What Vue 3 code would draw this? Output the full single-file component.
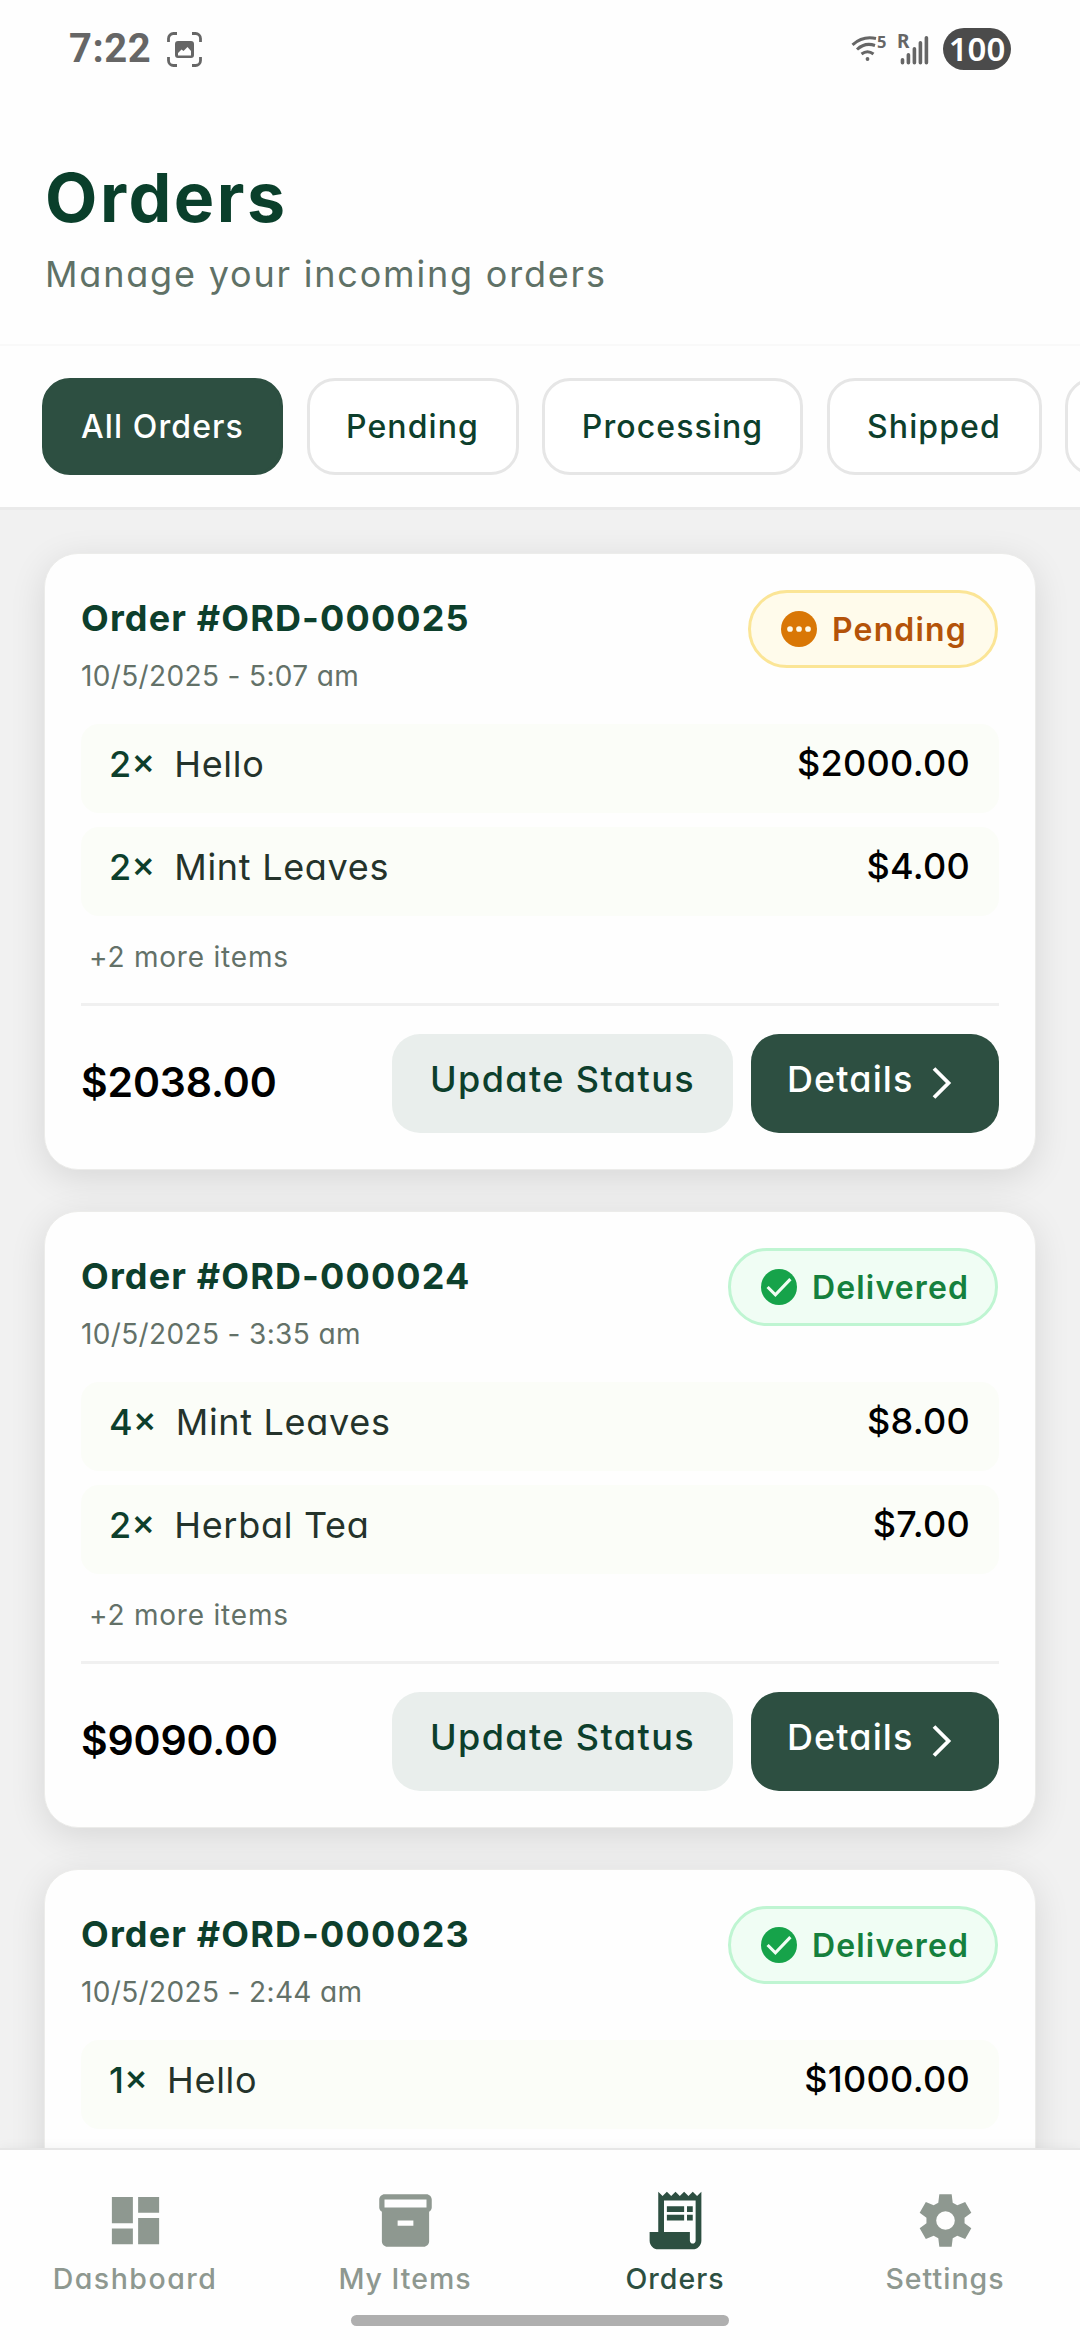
<script setup>
const chips = [
  { key: 'all', label: 'All Orders', active: true },
  { key: 'pending', label: 'Pending' },
  { key: 'processing', label: 'Processing' },
  { key: 'shipped', label: 'Shipped' },
  { key: 'delivered', label: 'Delivered' },
]

const orders = [
  {
    id: 'ORD-000025',
    date: '10/5/2025 - 5:07 am',
    status: 'Pending',
    items: [
      { qty: 2, name: 'Hello', price: '$2000.00' },
      { qty: 2, name: 'Mint Leaves', price: '$4.00' },
    ],
    more: 2,
    total: '$2038.00',
  },
  {
    id: 'ORD-000024',
    date: '10/5/2025 - 3:35 am',
    status: 'Delivered',
    items: [
      { qty: 4, name: 'Mint Leaves', price: '$8.00' },
      { qty: 2, name: 'Herbal Tea', price: '$7.00' },
    ],
    more: 2,
    total: '$9090.00',
  },
  {
    id: 'ORD-000023',
    date: '10/5/2025 - 2:44 am',
    status: 'Delivered',
    items: [{ qty: 1, name: 'Hello', price: '$1000.00' }],
    more: 0,
    total: '$1000.00',
  },
]

const tabs = [
  {
    label: 'Dashboard',
    key: 'dashboard',
    path: 'M3 13h8V3H3v10zm0 8h8v-6H3v6zm10 0h8V11h-8v10zm0-18v6h8V3h-8z',
  },
  {
    label: 'My Items',
    key: 'items',
    path: 'M20 2H4c-1 0-2 .9-2 2v3.01c0 .72.43 1.34 1 1.69V20c0 1.1 1.1 2 2 2h14c.9 0 2-.9 2-2V8.7c.57-.35 1-.97 1-1.69V4c0-1.1-1-2-2-2zm-5 12H9v-2h6v2zm5-7H4V4h16v3z',
  },
  {
    label: 'Orders',
    key: 'orders',
    active: true,
    path: 'M19.5 3.5L18 2l-1.5 1.5L15 2l-1.5 1.5L12 2l-1.5 1.5L9 2 7.5 3.5 6 2v14H3v3c0 1.66 1.34 3 3 3h12c1.66 0 3-1.34 3-3V2l-1.5 1.5zM19 19c0 .55-.45 1-1 1s-1-.45-1-1v-3H8V5h11v14zM9 7h6v2H9zM16 7h2v2h-2zM9 10h6v2H9zM16 10h2v2h-2z',
  },
  {
    label: 'Settings',
    key: 'settings',
    path: 'M9.65 2H14.35L14.75 5.2 16.51 6.22 19.49 4.96 21.84 9.04 19.26 10.98V13.02L21.84 14.96 19.49 19.04 16.51 17.78 14.75 18.8 14.35 22H9.65L9.25 18.8 7.49 17.78 4.51 19.04 2.16 14.96 4.74 13.02V10.98L2.16 9.04 4.51 4.96 7.49 6.22 9.25 5.2zM12 15.55a3.55 3.55 0 1 0 0-7.1 3.55 3.55 0 0 0 0 7.1z',
  },
]
</script>

<template>
  <div class="screen">
    <div class="status">
      <span class="clock">7:22</span>
      <svg class="capture" viewBox="0 0 35 35" fill="none">
        <path d="M1.5 10V6.5a5 5 0 0 1 5-5H10M25 1.5h3.5a5 5 0 0 1 5 5V10M33.5 25v3.5a5 5 0 0 1-5 5H25M10 33.5H6.5a5 5 0 0 1-5-5V25" stroke="#666" stroke-width="2.8" />
        <path fill="#666" fill-rule="evenodd" d="M11 9h13a3 3 0 0 1 3 3v11a3 3 0 0 1-3 3H11a3 3 0 0 1-3-3V12a3 3 0 0 1 3-3zM11 23.5h13v-4.500l-3.5-4-4 4-2-1.5-3.5 3.5z" />
      </svg>
      <span class="spacer"></span>
      <svg class="wifi" viewBox="0 -10 38 50" fill="none" stroke="#666" stroke-width="3">
        <path d="M1.5 10.8Q12 1.5 25 4.500M6 15.5Q14 8 24 11.5M10.5 20Q16.5 15.5 22.500 20" />
        <circle cx="16.5" cy="25" r="1.9" fill="#666" stroke="none" />
        <text x="26" y="14" class="tiny">5</text>
      </svg>
      <svg class="signal" viewBox="0 -9 32 50">
        <text x="0" y="15" class="tiny tiny-r">R</text>
        <path d="M5.5 26.700v3M11.4 21.700v8M17.4 15.700v14M23.4 9.700v20M29.4 4.700v25" stroke="#666" stroke-width="3.6" stroke-linecap="round" />
      </svg>
      <span class="battery">100</span>
    </div>

    <header class="header">
      <h1>Orders</h1>
      <p>Manage your incoming orders</p>
    </header>

    <div class="chips">
      <button v-for="c in chips" :key="c.key" class="chip" :class="['chip-' + c.key, { active: c.active }]">
        {{ c.label }}
      </button>
    </div>

    <main class="list">
      <article v-for="o in orders" :key="o.id" class="card">
        <div class="card-head">
          <div>
            <h2>Order #{{ o.id }}</h2>
            <p class="date">{{ o.date }}</p>
          </div>
          <span class="badge" :class="o.status.toLowerCase()">
            <svg v-if="o.status === 'Pending'" viewBox="0 0 24 24">
              <circle cx="12" cy="12" r="12" fill="#d97706" />
              <g fill="#fffbeb">
                <circle cx="6" cy="12" r="1.9" />
                <circle cx="12" cy="12" r="1.9" />
                <circle cx="18" cy="12" r="1.9" />
              </g>
            </svg>
            <svg v-else viewBox="0 0 24 24">
              <circle cx="12" cy="12" r="12" fill="#16a34a" />
              <path d="M4.4 12l5.200 5.200L19.6 6.800" fill="none" stroke="#f0fdf4" stroke-width="2.1" />
            </svg>
            <span>{{ o.status }}</span>
          </span>
        </div>

        <div class="items">
          <div v-for="i in o.items" :key="i.name" class="item">
            <span class="qty">{{ i.qty }}×</span>
            <span class="name">{{ i.name }}</span>
            <span class="price">{{ i.price }}</span>
          </div>
        </div>
        <p v-if="o.more" class="more">+{{ o.more }} more items</p>

        <div class="card-foot">
          <span class="total">{{ o.total }}</span>
          <button class="btn update">Update Status</button>
          <button class="btn details">
            <span>Details</span>
            <svg viewBox="0 0 20 32"><path d="M2 1.5l14.500 14.500L2 30.5" fill="none" stroke="#fff" stroke-width="3.8" /></svg>
          </button>
        </div>
      </article>
    </main>

    <nav class="nav">
      <a v-for="t in tabs" :key="t.key" class="tab" :class="['tab-' + t.key, { active: t.active }]">
        <span class="icon"><svg viewBox="0 0 24 24"><path :d="t.path" fill="currentColor" fill-rule="evenodd" /></svg></span>
        <span class="label">{{ t.label }}</span>
      </a>
      <div class="handle"></div>
    </nav>
  </div>
</template>

<style>
body {
  background: #f1f1f1;
}
</style>

<style scoped>
.screen {
  width: 1080px;
  height: 2340px;
  display: flex;
  flex-direction: column;
  overflow: hidden;
  background: #f1f1f1;
  font-family: Inter, 'Open Sans', sans-serif;
  font-feature-settings: 'cv11' 1;
}
h1,
h2,
p {
  margin: 0;
}
button {
  font-family: inherit;
  font-feature-settings: inherit;
  border: 0;
  padding: 0;
}
.status,
.header,
.chips {
  background: #fefefe;
  flex: none;
}
.status {
  height: 98px;
  box-sizing: border-box;
  display: flex;
  align-items: center;
  padding: 0 69px;
}
.clock {
  width: 98px;
  font: 700 40px/40px Roboto, sans-serif;
  letter-spacing: 0.5px;
  color: #666;
}
.capture {
  width: 35px;
  height: 35px;
}
.spacer {
  flex: 1;
}
.wifi {
  width: 38px;
  height: 50px;
  margin-right: 8px;
}
.signal {
  width: 32px;
  height: 50px;
  margin-right: 14px;
}
.tiny {
  font: 700 16.5px 'Noto Sans', sans-serif;
  fill: #666;
  stroke: none;
}
.tiny-r {
  font-size: 19px;
}
.battery {
  width: 68px;
  height: 42px;
  border-radius: 21px;
  background: #4b4b4b;
  color: #fff;
  font: 600 33px/41px 'Noto Sans', sans-serif;
  text-align: center;
}
.header {
  height: 248px;
  box-sizing: border-box;
  padding: 58px 45px 0;
  border-bottom: 2px solid #f9f9f9;
}
h1 {
  font-size: 68px;
  line-height: 82px;
  font-weight: 700;
  letter-spacing: 2.5px;
  color: #0a3f2b;
}
.header p {
  margin-top: 10px;
  font-size: 36px;
  line-height: 52px;
  letter-spacing: 1.8px;
  color: #5f7166;
}
.chips {
  height: 164px;
  box-sizing: border-box;
  display: flex;
  gap: 23.5px;
  padding: 32px 0 0 42px;
  border-bottom: 3px solid #eaeaea;
}
.chip {
  flex: none;
  height: 97px;
  box-sizing: border-box;
  border: 3px solid #e6e6e6;
  border-radius: 28px;
  background: #fff;
  color: #0d3f2c;
  font-size: 32px;
  font-weight: 500;
  letter-spacing: 1.1px;
}
.chip.active {
  background: #2d4f41;
  border-color: #2d4f41;
  color: #fff;
}
.chip-all {
  width: 241px;
}
.chip-pending {
  width: 212px;
}
.chip-processing {
  width: 261px;
}
.chip-shipped {
  width: 215px;
}
.chip-delivered {
  width: 230px;
}
.list {
  flex: 1;
  min-height: 0;
  overflow: hidden;
  display: flex;
  flex-direction: column;
  gap: 41px;
  padding: 43px 44px 0;
}
.card {
  flex: none;
  box-sizing: border-box;
  border: 1px solid #ececea;
  border-radius: 34px;
  background: #fefefe;
  padding: 36px;
  box-shadow: 0 8px 36px rgba(0, 0, 0, 0.11);
}
.card-head {
  height: 134px;
  display: flex;
  justify-content: space-between;
  align-items: flex-start;
}
h2 {
  padding-top: 3px;
  font-size: 36px;
  line-height: 50px;
  font-weight: 700;
  letter-spacing: 1.15px;
  color: #0d3f2c;
}
.date {
  margin-top: 13px;
  font-size: 28px;
  line-height: 40px;
  letter-spacing: 0.36px;
  color: #637168;
}
.badge {
  height: 78px;
  box-sizing: border-box;
  display: flex;
  align-items: center;
  gap: 15px;
  padding: 0 0 0 30px;
  margin-right: 1px;
  border: 3px solid;
  border-radius: 39px;
  font-size: 32px;
  font-weight: 600;
  letter-spacing: 1.15px;
}
.badge svg {
  width: 36px;
  height: 36px;
}
.badge.pending {
  width: 250px;
  background: #fffbeb;
  border-color: #fbe596;
  color: #b45309;
}
.badge.delivered {
  width: 270px;
  background: #f0fdf4;
  border-color: #bff5d2;
  color: #15803d;
}
.items {
  display: flex;
  flex-direction: column;
  gap: 14px;
  margin-bottom: 21px;
}
.item {
  height: 89px;
  box-sizing: border-box;
  display: flex;
  padding: 14px 29px 0 28px;
  border-radius: 18px;
  background: #fbfdf8;
  font-size: 36px;
  line-height: 53px;
}
.qty {
  color: #0d3f2c;
  font-weight: 500;
  margin-right: 19px;
}
.name {
  flex: 1;
  letter-spacing: 0.7px;
  color: #24332b;
}
.price {
  color: #000;
  font-weight: 500;
  line-height: 51px;
  letter-spacing: 0.3px;
}
.more {
  margin: 0 8px 26px;
  font-size: 28px;
  line-height: 40px;
  letter-spacing: 0.8px;
  color: #637168;
}
.card-foot {
  display: flex;
  align-items: center;
  border-top: 3px solid #f0f0f0;
  padding-top: 28px;
}
.total {
  flex: 1;
  padding-bottom: 3px;
  font-size: 41px;
  line-height: 60px;
  font-weight: 600;
  letter-spacing: -0.15px;
  color: #000;
}
.btn {
  height: 99px;
  border-radius: 28px;
  font-size: 36px;
  font-weight: 500;
  letter-spacing: 1.4px;
  padding-bottom: 10px;
}
.update {
  width: 341px;
  background: #e9eeec;
  color: #0d3f2c;
  margin-right: 18px;
}
.details {
  width: 248px;
  background: #2d4f41;
  color: #fff;
  display: flex;
  align-items: center;
  justify-content: flex-start;
  letter-spacing: 1.1px;
  padding-left: 36px;
}
.details svg {
  width: 20px;
  height: 32px;
  margin: 8px 0 0 18px;
}
.nav {
  flex: none;
  height: 192px;
  box-sizing: border-box;
  border-top: 2px solid #e6e6e6;
  background: #fefefe;
  box-shadow: 0 -2px 10px rgba(0, 0, 0, 0.04);
  display: grid;
  grid-template-columns: repeat(4, 270px);
  grid-template-rows: 165px 11px;
  position: relative;
}
.tab {
  display: flex;
  flex-direction: column;
  align-items: center;
  color: #8e9890;
  padding-top: 34px;
}
.tab.active {
  color: #2d4f41;
}
.icon {
  width: 72px;
  height: 73px;
  display: flex;
  align-items: center;
  justify-content: center;
}
.icon svg {
  width: 63px;
  height: 63px;
}
.active .icon svg {
  width: 69px;
  height: 69px;
}
.label {
  font-size: 28.5px;
  line-height: 44px;
  font-weight: 500;
  letter-spacing: 1px;
}
.tab-dashboard .label {
  letter-spacing: 1.5px;
}
.handle {
  grid-column: 1 / -1;
  width: 378px;
  justify-self: center;
  border-radius: 6px;
  background: #afafaf;
}
</style>
